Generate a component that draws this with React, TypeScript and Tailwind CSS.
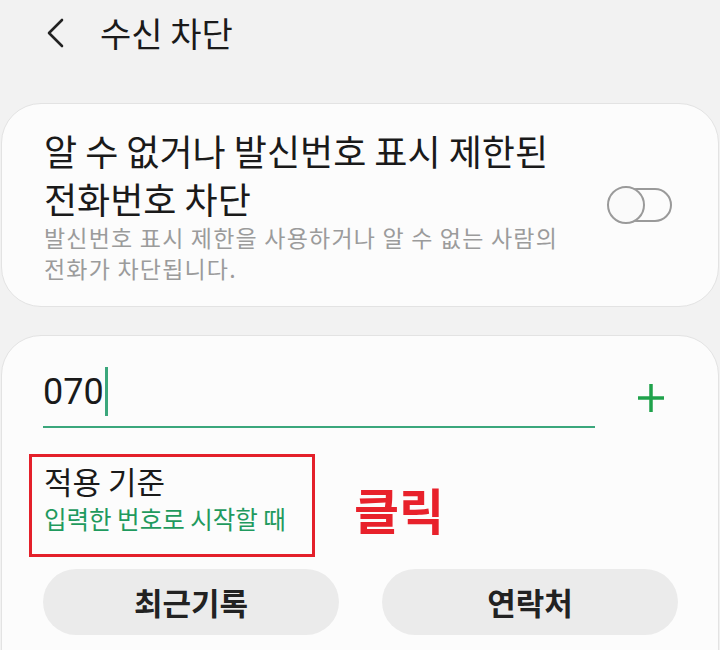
import React from 'react';

const font = { fontFamily: '"Noto Sans CJK KR", "Noto Sans", sans-serif' };

export default function App() {
  return (
    <div
      className="w-[720px] h-[650px] overflow-hidden bg-[#f2f2f2] text-[#1a1a1a]"
      style={font}
    >
      {/* Header */}
      <header className="h-[66px] flex items-center pl-[46px]">
        <svg width="18" height="30" viewBox="0 0 18 30" fill="none">
          <polyline points="16,2 3,15 16,28" stroke="#222" strokeWidth="2.6" strokeLinecap="round" strokeLinejoin="round" />
        </svg>
        <h1 className="ml-[36px] text-[34px] leading-none font-normal">수신 차단</h1>
      </header>

      {/* Unknown number block card */}
      <section className="mt-[37px] mx-[1px] rounded-[40px] bg-[#fcfcfc] border border-[#e3e3e3] pl-[42px] pr-[46px] pt-[22px] pb-[22px] flex items-center justify-between">
        <div>
          <p className="text-[36px] leading-[48px] whitespace-nowrap">
            알 수 없거나 발신번호 표시 제한된
            <br />
            전화번호 차단
          </p>
          <p className="text-[23px] tracking-[1.2px] leading-[31px] text-[#9b9b9b] whitespace-nowrap">
            발신번호 표시 제한을 사용하거나 알 수 없는 사람의
            <br />
            전화가 차단됩니다.
          </p>
        </div>
        <div className="relative w-[65px] h-[38px] shrink-0">
          <div className="absolute right-0 top-[2px] w-[52px] h-[34px] rounded-full border-2 border-[#9a9a9a]" />
          <div className="absolute left-0 top-0 w-[38px] h-[38px] rounded-full border-2 border-[#9a9a9a] bg-[#fafafa]" />
        </div>
      </section>

      {/* Number input card */}
      <section className="mt-[28px] mx-[1px] rounded-t-[40px] bg-[#fcfcfc] border border-[#e3e3e3] pl-[41px] pt-[31px] pb-[40px]">
        <div className="flex">
          <div className="w-[552px] border-b-2 border-[#3ba77c] pb-[10px]">
            <div className="h-[49px] flex items-center">
              <span className="text-[36px] leading-none text-[#1a1a1a]" style={{ fontFamily: 'Roboto, "Noto Sans", sans-serif' }}>
                070
              </span>
              <span className="ml-[1px] w-[3px] h-[49px] bg-[#3ba77c]" />
            </div>
          </div>
          <div className="ml-[43px] mt-[17px]">
            <svg width="26" height="28" viewBox="0 0 26 28">
              <line x1="13" y1="0" x2="13" y2="28" stroke="#1fa24b" strokeWidth="3.5" />
              <line x1="0" y1="14" x2="26" y2="14" stroke="#1fa24b" strokeWidth="3.5" />
            </svg>
          </div>
        </div>

        <div className="mt-[26px] flex items-start">
          <div className="-ml-[14px] w-[286px] h-[103px] border-[3px] border-[#e4202a] pl-[12px] pt-[6px]">
            <p className="text-[31px] leading-[36px]">적용 기준</p>
            <p className="mt-[5px] text-[24.5px] leading-[30px] text-[#1f9a5e] whitespace-nowrap">
              입력한 번호로 시작할 때
            </p>
          </div>
          <span className="ml-[39px] mt-[30px] text-[49px] leading-none font-bold text-[#e8212b]">클릭</span>
        </div>

        <div className="mt-[12px] flex gap-[43px]">
          <button className="w-[296px] h-[66px] rounded-full bg-[#ebebeb] text-[31px] font-semibold text-[#222]">
            최근기록
          </button>
          <button className="w-[296px] h-[66px] rounded-full bg-[#ebebeb] text-[31px] font-semibold text-[#222]">
            연락처
          </button>
        </div>
      </section>
    </div>
  );
}
